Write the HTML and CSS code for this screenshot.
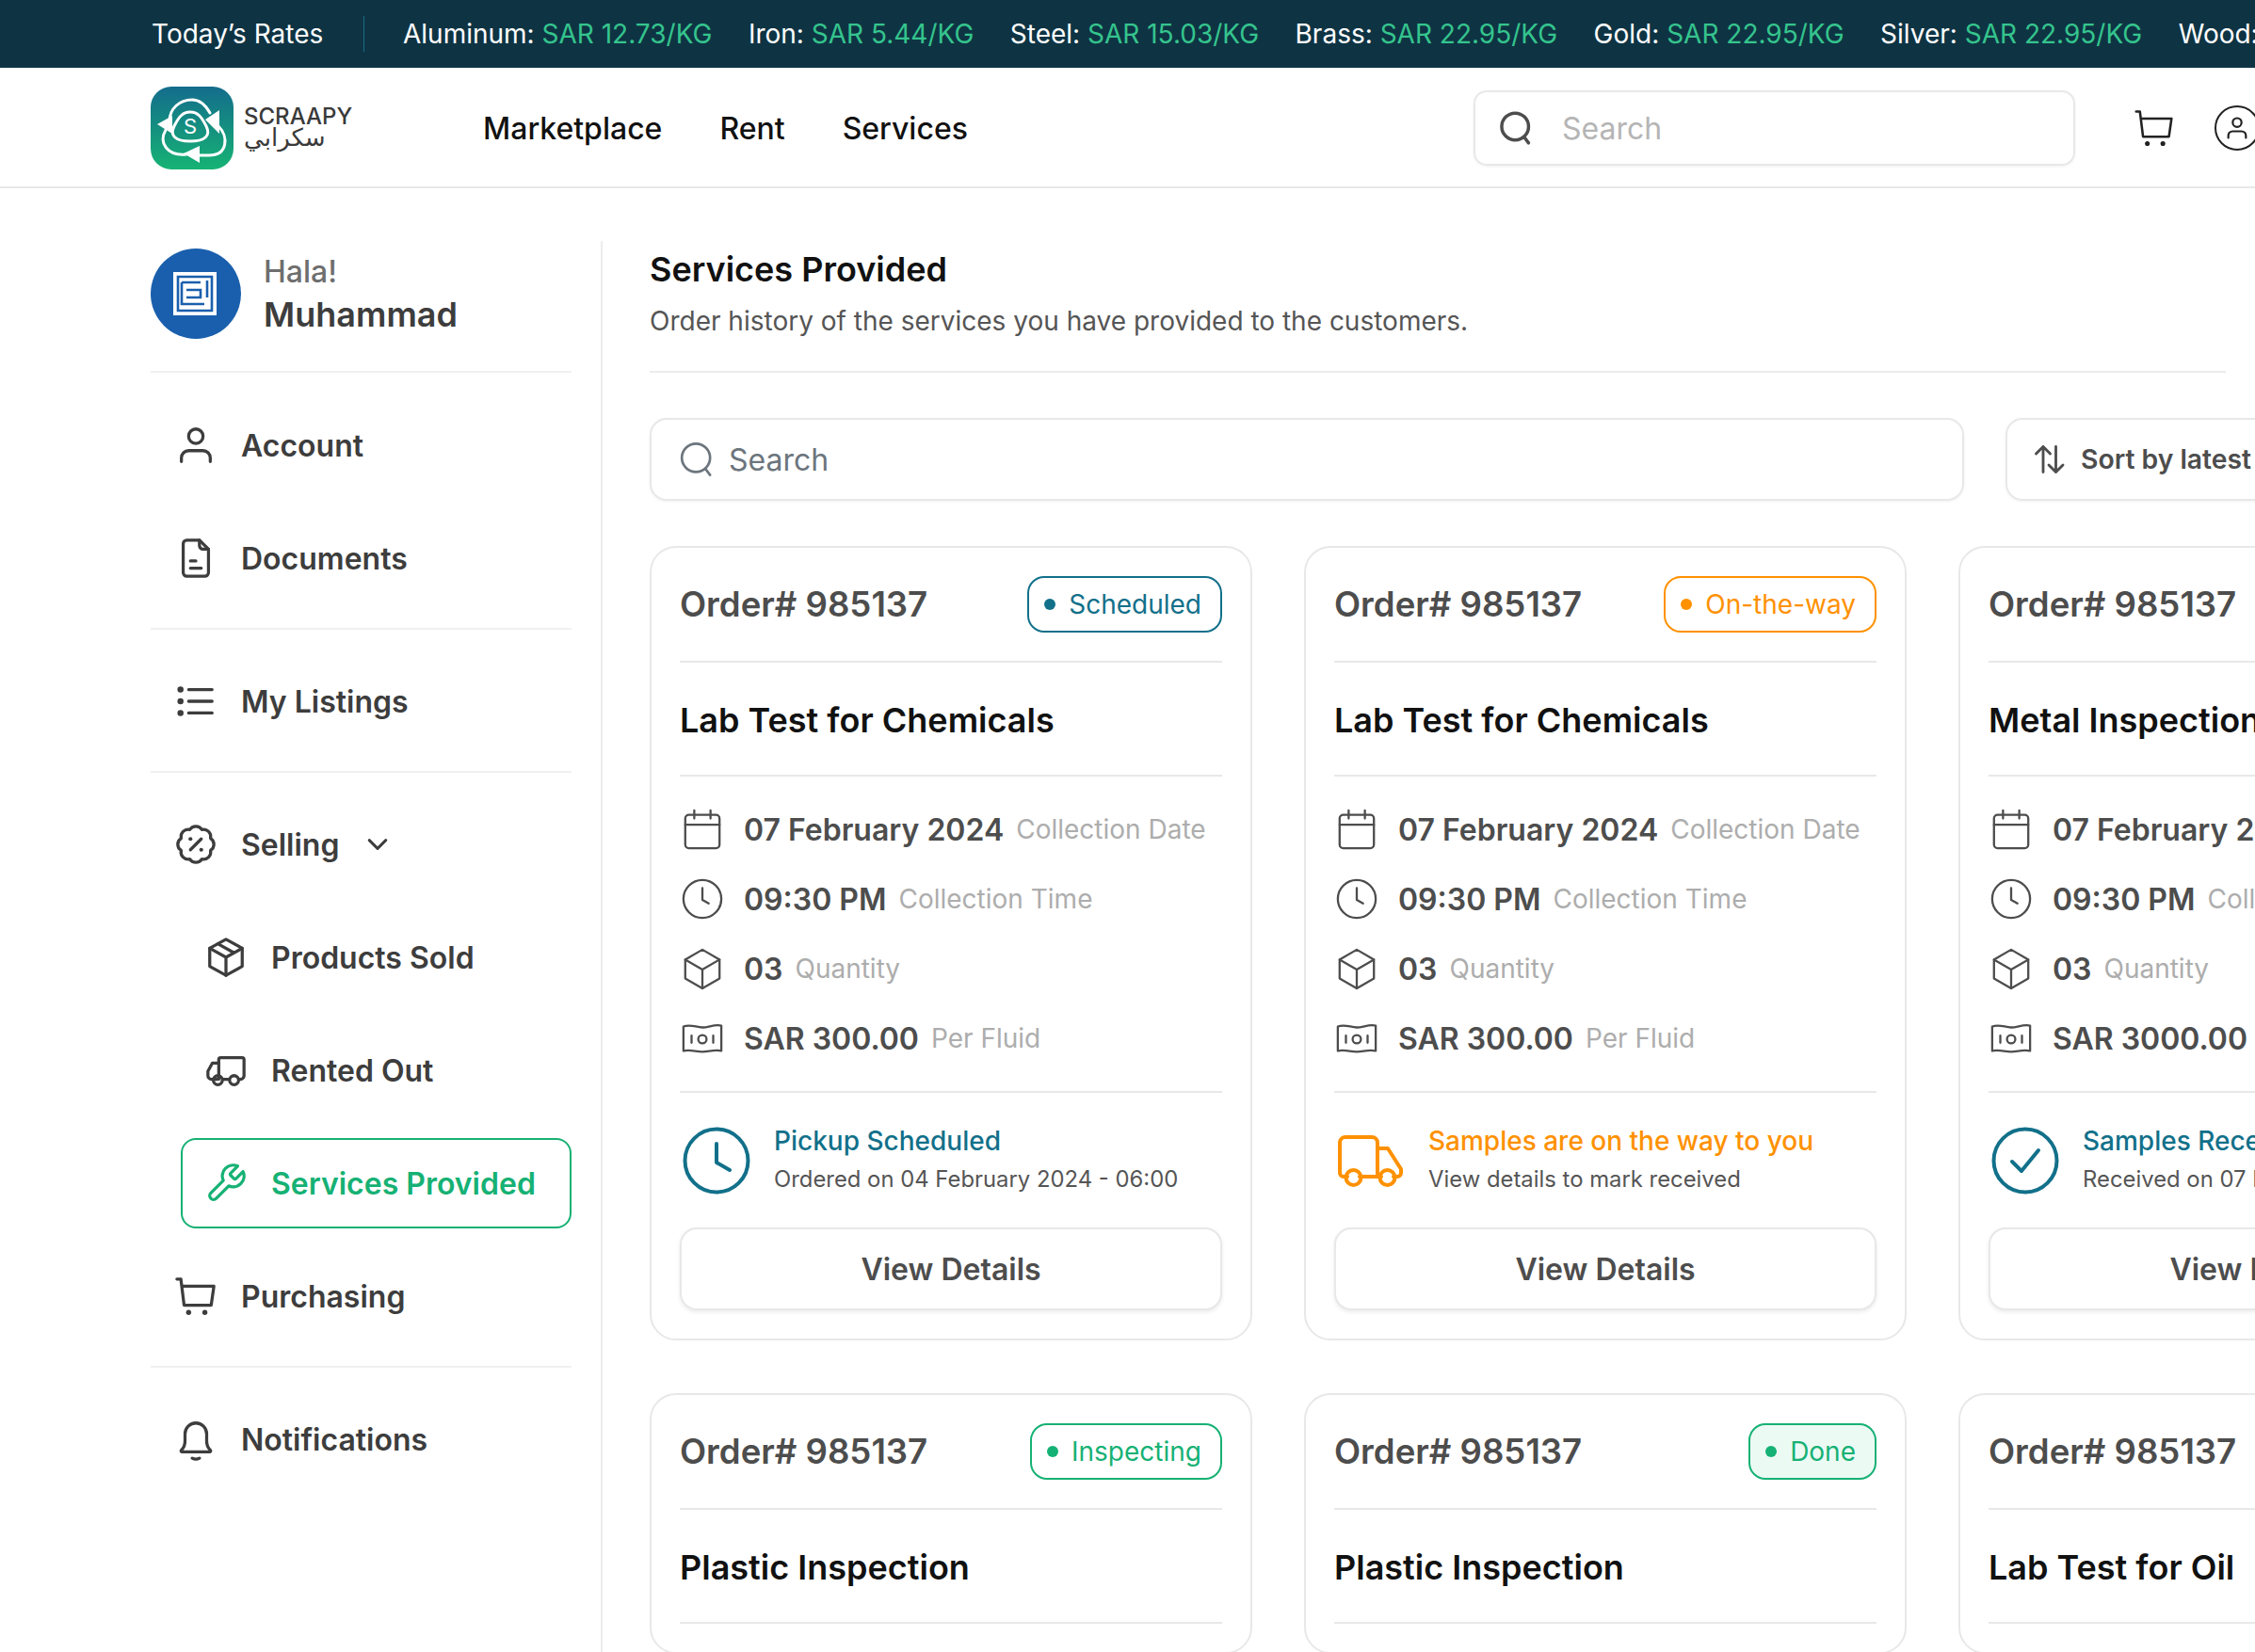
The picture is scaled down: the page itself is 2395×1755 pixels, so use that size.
FILE: index.html
```html
<!DOCTYPE html>
<html>
<head>
    <meta charset="utf-8">
    <meta name="viewport" content="width=device-width, initial-scale=1">
    <title>Services Provided</title>
    <link rel="stylesheet" href="styles.css">
</head>
<body>
    <svg class="sprite" xmlns="http://www.w3.org/2000/svg">
        <symbol id="i-user" viewBox="0 0 24 24"><circle cx="12" cy="7" r="4"/><path d="M4 21v-2a4 4 0 0 1 4-4h8a4 4 0 0 1 4 4v2"/></symbol>
        <symbol id="i-doc" viewBox="0 0 24 24"><path d="M14 2H7a2 2 0 0 0-2 2v16a2 2 0 0 0 2 2h10a2 2 0 0 0 2-2V7z"/><path d="M14 2v3a2 2 0 0 0 2 2h3"/><path d="M9 13.500h3M9 17.500h6"/></symbol>
        <symbol id="i-list" viewBox="0 0 24 24"><path d="M8 5.500h13M8 12h13M8 18.500h13"/><circle class="fill" cx="3.500" cy="5.500" r="1.700"/><circle class="fill" cx="3.500" cy="12" r="1.700"/><circle class="fill" cx="3.500" cy="18.500" r="1.700"/></symbol>
        <symbol id="i-percent" viewBox="0 0 24 24"><path d="M3.850 8.620a4 4 0 0 1 4.780-4.770 4 4 0 0 1 6.740 0 4 4 0 0 1 4.780 4.780 4 4 0 0 1 0 6.740 4 4 0 0 1-4.770 4.780 4 4 0 0 1-6.750 0 4 4 0 0 1-4.780-4.770 4 4 0 0 1 0-6.760Z"/><path d="m15 9-6 6"/><circle class="fill" cx="9" cy="9" r="1.100"/><circle class="fill" cx="15" cy="15" r="1.100"/></symbol>
        <symbol id="i-box" viewBox="0 0 24 24"><path d="M12 2l9 5v10l-9 5-9-5V7z"/><path d="M3 7l9 5 9-5M12 12v10M7.500 4.500l9 5"/></symbol>
        <symbol id="i-truck" viewBox="0 0 24 24"><path d="M7 17H4a2 2 0 0 1-2-2v-2.500L4.500 8H8V6a1 1 0 0 1 1-1h12a1 1 0 0 1 1 1v9a2 2 0 0 1-2 2h-1"/><path d="M8 8v9M10.500 17h3"/><circle cx="7.500" cy="17.500" r="2.500"/><circle cx="16.500" cy="17.500" r="2.500"/></symbol>
        <symbol id="i-wrench" viewBox="0 0 24 24"><path d="M14.700 6.300a1 1 0 0 0 0 1.400l1.600 1.600a1 1 0 0 0 1.400 0l3.770-3.770a6 6 0 0 1-7.940 7.940l-6.910 6.910a2.120 2.120 0 0 1-3-3l6.910-6.910a6 6 0 0 1 7.940-7.940l-3.760 3.760z"/></symbol>
        <symbol id="i-cart" viewBox="0 0 24 24"><path d="M1.500 2.500h2.200L5.500 17h15L22 6.500H4.300"/><circle class="fill" cx="8" cy="21" r="1.400"/><circle class="fill" cx="17" cy="21" r="1.400"/></symbol>
        <symbol id="i-bell" viewBox="0 0 24 24"><path d="M4 18c1.500-1.500 2-3 2-5V9a6 6 0 0 1 12 0v4c0 2 .5 3.500 2 5 .4.500.2 1-.5 1h-15c-.7 0-.9-.5-.5-1z"/><path d="M10 22.500c1.300.7 2.700.7 4 0"/></symbol>
        <symbol id="i-search" viewBox="0 0 24 24"><circle cx="11.500" cy="11" r="9"/><path d="M17.500 18l3 4"/></symbol>
        <symbol id="i-sort" viewBox="0 0 24 24"><path d="M8 21V3M3 8l5-5 5 5M17 3v18M12 16l5 5 5-5"/></symbol>
        <symbol id="i-chevron" viewBox="0 0 24 24"><path d="M5 8.500l7 7 7-7"/></symbol>
        <symbol id="i-calendar" viewBox="0 0 24 24"><rect x="2.500" y="4" width="19" height="18.500" rx="2"/><path d="M2.500 9.500h19M7.500 1.500v4.500M16.500 1.500v4.500"/></symbol>
        <symbol id="i-clock" viewBox="0 0 24 24"><circle cx="12" cy="12" r="10.500"/><path d="M12 6v6.500l3.500 2"/></symbol>
        <symbol id="i-cube" viewBox="0 0 24 24"><path d="M12 1.500l9.500 5.500v10.500L12 23l-9.500-5.500V7z"/><path d="M2.500 7l9.500 5.500L21.500 7M12 12.500V23"/></symbol>
        <symbol id="i-money" viewBox="0 0 24 24"><path d="M1.500 5.500c4-1.500 7 .5 10.500.5s7-2 10.500-1v14c-4-1-7 .5-10.500.5s-7-1.500-10.500-.500z"/><circle cx="12" cy="12.500" r="2.300"/><path d="M6 10.500v4M18 10.500v4"/></symbol>
        <symbol id="i-clock-big" viewBox="0 0 72 72"><circle cx="36" cy="36" r="33.500"/><path d="M36 18v20l14 8"/></symbol>
        <symbol id="i-check-big" viewBox="0 0 72 72"><circle cx="36" cy="36" r="33.500"/><path d="M22 37l10 10 18-22"/></symbol>
        <symbol id="i-van" viewBox="0 0 72 72"><path d="M11 53H7a4 4 0 0 1-4-4V17a6 6 0 0 1 6-6h28a6 6 0 0 1 6 6v36H24M43 23h11l14 22v4a4 4 0 0 1-4 4h-4M43 53h4"/><circle cx="17.500" cy="54" r="8"/><circle cx="53.500" cy="54" r="8"/></symbol>
    </svg>

    <div class="page">
        <div class="rates">
            <span class="rates-title">Today’s Rates</span>
            <span class="rates-list">
                <span class="rate">Aluminum: <b>SAR 12.73/KG</b></span>
                <span class="rate">Iron: <b>SAR 5.44/KG</b></span>
                <span class="rate">Steel: <b>SAR 15.03/KG</b></span>
                <span class="rate">Brass: <b>SAR 22.95/KG</b></span>
                <span class="rate">Gold: <b>SAR 22.95/KG</b></span>
                <span class="rate">Silver: <b>SAR 22.95/KG</b></span>
                <span class="rate">Wood: <b>SAR 22.95/KG</b></span>
            </span>
        </div>

        <header class="nav">
            <div class="logo">
                <svg class="logo-mark" viewBox="0 0 88 88">
                    <defs>
                        <linearGradient id="logoGrad" x1="0" y1="0" x2="0" y2="1">
                            <stop offset="0" stop-color="#146c8c"/>
                            <stop offset="1" stop-color="#16b374"/>
                        </linearGradient>
                    </defs>
                    <rect width="88" height="88" rx="22" fill="url(#logoGrad)"/>
                    <g fill="none" stroke="#fff" stroke-width="3" stroke-linecap="round">
                        <path d="M20 37C20 23 31 14 44 14c8 0 14 5 19 14"/>
                        <path d="M72 42c11 11 10 31-10 31H51"/>
                        <path d="M38 72C18 74 8 60 16 46"/>
                        <path d="M42 27c8 0 12 5 17 15s-1 16-17 16-22-6-17-16 9-15 17-15z"/>
                    </g>
                    <path fill="#fff" d="M7 40l16-9v19zM73 25L58 35l15 15zM35 71l17-8v18z"/>
                    <text class="logo-s" x="42" y="50" text-anchor="middle">S</text>
                </svg>
                <div class="logo-text">
                    <span class="logo-en">SCRAAPY</span>
                    <span class="logo-ar">سكرابي</span>
                </div>
            </div>
            <nav class="nav-links">
                <a>Marketplace</a>
                <a>Rent</a>
                <a>Services</a>
            </nav>
            <div class="nav-search">
                <svg class="ico ico-search"><use href="#i-search"/></svg>
                <span>Search</span>
            </div>
            <svg class="ico nav-cart"><use href="#i-cart"/></svg>
            <span class="nav-user"><svg class="ico"><use href="#i-user"/></svg></span>
        </header>

        <div class="layout">
            <aside class="side">
                <div class="hello">
                    <span class="avatar">
                        <svg viewBox="0 0 96 96">
                            <rect x="24" y="25" width="46" height="46" fill="#fff"/>
                            <g fill="none" stroke="#1a5fad" stroke-width="2.600">
                                <path d="M29 30h36v36H29z"/>
                                <path d="M33 36h20M33 36v23h24M60 34v18M38 44h15v8H38"/>
                            </g>
                        </svg>
                    </span>
                    <div>
                        <div class="hala">Hala!</div>
                        <div class="name">Muhammad</div>
                    </div>
                </div>

                <div class="group">
                    <a class="item"><svg class="ico"><use href="#i-user"/></svg>Account</a>
                    <a class="item"><svg class="ico"><use href="#i-doc"/></svg>Documents</a>
                </div>
                <div class="group">
                    <a class="item"><svg class="ico"><use href="#i-list"/></svg>My Listings</a>
                </div>
                <div class="group">
                    <a class="item"><svg class="ico"><use href="#i-percent"/></svg>Selling<svg class="ico chev"><use href="#i-chevron"/></svg></a>
                    <a class="item sub"><svg class="ico"><use href="#i-box"/></svg>Products Sold</a>
                    <a class="item sub"><svg class="ico"><use href="#i-truck"/></svg>Rented Out</a>
                    <a class="item sub active"><svg class="ico"><use href="#i-wrench"/></svg>Services Provided</a>
                    <a class="item"><svg class="ico"><use href="#i-cart"/></svg>Purchasing</a>
                </div>
                <div class="group last">
                    <a class="item"><svg class="ico"><use href="#i-bell"/></svg>Notifications</a>
                </div>
            </aside>

            <main class="main">
                <div class="head">
                    <h1>Services Provided</h1>
                    <p>Order history of the services you have provided to the customers.</p>
                </div>

                <div class="tools">
                    <div class="search">
                        <svg class="ico"><use href="#i-search"/></svg>
                        <span>Search</span>
                    </div>
                    <div class="sort">
                        <svg class="ico"><use href="#i-sort"/></svg>
                        <span>Sort by latest</span>
                    </div>
                </div>

                <div class="cards">
                    <div class="card">
                        <div class="card-head"><span class="order">Order# 985137</span><span class="badge teal"><i></i>Scheduled</span></div>
                        <div class="card-title">Lab Test for Chemicals</div>
                        <div class="facts">
                            <div class="fact"><svg class="ico"><use href="#i-calendar"/></svg><b>07 February 2024</b><span>Collection Date</span></div>
                            <div class="fact"><svg class="ico"><use href="#i-clock"/></svg><b>09:30 PM</b><span>Collection Time</span></div>
                            <div class="fact"><svg class="ico"><use href="#i-cube"/></svg><b>03</b><span>Quantity</span></div>
                            <div class="fact"><svg class="ico"><use href="#i-money"/></svg><b>SAR 300.00</b><span>Per Fluid</span></div>
                        </div>
                        <div class="status teal">
                            <svg class="ico"><use href="#i-clock-big"/></svg>
                            <div><div class="status-title">Pickup Scheduled</div><div class="status-sub">Ordered on 04 February 2024 - 06:00</div></div>
                        </div>
                        <button class="details" type="button">View Details</button>
                    </div>

                    <div class="card">
                        <div class="card-head"><span class="order">Order# 985137</span><span class="badge orange"><i></i>On-the-way</span></div>
                        <div class="card-title">Lab Test for Chemicals</div>
                        <div class="facts">
                            <div class="fact"><svg class="ico"><use href="#i-calendar"/></svg><b>07 February 2024</b><span>Collection Date</span></div>
                            <div class="fact"><svg class="ico"><use href="#i-clock"/></svg><b>09:30 PM</b><span>Collection Time</span></div>
                            <div class="fact"><svg class="ico"><use href="#i-cube"/></svg><b>03</b><span>Quantity</span></div>
                            <div class="fact"><svg class="ico"><use href="#i-money"/></svg><b>SAR 300.00</b><span>Per Fluid</span></div>
                        </div>
                        <div class="status orange">
                            <svg class="ico"><use href="#i-van"/></svg>
                            <div><div class="status-title">Samples are on the way to you</div><div class="status-sub">View details to mark received</div></div>
                        </div>
                        <button class="details" type="button">View Details</button>
                    </div>

                    <div class="card">
                        <div class="card-head"><span class="order">Order# 985137</span><span class="badge green"><i></i>Received</span></div>
                        <div class="card-title">Metal Inspection</div>
                        <div class="facts">
                            <div class="fact"><svg class="ico"><use href="#i-calendar"/></svg><b>07 February 2024</b><span>Collection Date</span></div>
                            <div class="fact"><svg class="ico"><use href="#i-clock"/></svg><b>09:30 PM</b><span>Collection Time</span></div>
                            <div class="fact"><svg class="ico"><use href="#i-cube"/></svg><b>03</b><span>Quantity</span></div>
                            <div class="fact"><svg class="ico"><use href="#i-money"/></svg><b>SAR 3000.00</b><span>Per Fluid</span></div>
                        </div>
                        <div class="status teal">
                            <svg class="ico"><use href="#i-check-big"/></svg>
                            <div><div class="status-title">Samples Received</div><div class="status-sub">Received on 07 February 2024 - 06:00</div></div>
                        </div>
                        <button class="details" type="button">View Details</button>
                    </div>

                    <div class="card">
                        <div class="card-head"><span class="order">Order# 985137</span><span class="badge green"><i></i>Inspecting</span></div>
                        <div class="card-title">Plastic Inspection</div>
                    </div>

                    <div class="card">
                        <div class="card-head"><span class="order">Order# 985137</span><span class="badge green done"><i></i>Done</span></div>
                        <div class="card-title">Plastic Inspection</div>
                    </div>

                    <div class="card">
                        <div class="card-head"><span class="order">Order# 985137</span><span class="badge green done"><i></i>Done</span></div>
                        <div class="card-title">Lab Test for Oil</div>
                    </div>
                </div>
            </main>
        </div>
    </div>
</body>
</html>
```

FILE: styles.css
```css
* {
    margin: 0;
    padding: 0;
    box-sizing: border-box;
}
html, body {
    height: 100%;
    overflow: hidden;
    background: #fff;
}
body {
    font-family: Inter, "Noto Sans", sans-serif;
    color: #3d3d3d;
}
.sprite {
    display: none;
}
.ico {
    display: block;
    flex: none;
    fill: none;
    stroke: currentColor;
    stroke-width: 1.9;
    stroke-linecap: round;
    stroke-linejoin: round;
}
.fill {
    fill: currentColor;
    stroke: none;
}
.page {
    width: 2800px;
    height: 1755px;
    overflow: hidden;
}

/* rates strip */
.rates {
    display: flex;
    align-items: center;
    height: 72px;
    padding-left: 161px;
    background: #0e3444;
    color: #fff;
    font-size: 28px;
    white-space: nowrap;
}
.rates-title {
    width: 226px;
    height: 38px;
    line-height: 38px;
    border-right: 1px solid #1c6b85;
}
.rates-list {
    display: flex;
    gap: 38.500px;
    margin-left: 41px;
}
.rate b {
    font-weight: 400;
    color: #35c48d;
}

/* header */
.nav {
    display: flex;
    align-items: center;
    height: 128px;
    padding: 2px 0 0 160px;
    border-bottom: 2px solid #e8e8e8;
}
.logo {
    display: flex;
    align-items: center;
    gap: 11px;
    width: 353px;
}
.logo-mark {
    width: 88px;
    height: 88px;
}
.logo-s {
    font-size: 22px;
    fill: #fff;
}
.logo-text {
    display: flex;
    flex-direction: column;
    padding-bottom: 8px;
    color: #3a3a3a;
}
.logo-en {
    font-size: 24px;
    font-weight: 500;
    line-height: 28px;
}
.logo-ar {
    font-family: "DejaVu Sans", sans-serif;
    font-size: 26px;
    line-height: 16px;
    text-align: left;
}
.nav-links {
    display: flex;
    gap: 61px;
    font-size: 32px;
    font-weight: 500;
    color: #111;
}
.nav-search {
    display: flex;
    align-items: center;
    gap: 30px;
    width: 639px;
    height: 80px;
    margin-left: 537px;
    padding-left: 24px;
    border: 2px solid #e8e8e8;
    border-radius: 14px;
    box-shadow: 0 1px 3px rgba(0, 0, 0, .06);
    font-size: 32px;
    color: #b5b5b5;
}
.ico-search {
    width: 38px;
    height: 38px;
    color: #4d4d4d;
    stroke-width: 2.2;
}
.nav-cart {
    width: 44px;
    height: 48px;
    margin-left: 62px;
    color: #222;
    stroke-width: 1.4;
}
.nav-user {
    display: flex;
    align-items: center;
    justify-content: center;
    width: 48px;
    height: 48px;
    margin-left: 42px;
    border: 2px solid #222;
    border-radius: 50%;
    color: #222;
}
.nav-user .ico {
    width: 28px;
    height: 28px;
}

/* sidebar + main */
.layout {
    display: flex;
    align-items: flex-start;
    margin-top: 56px;
    height: 1500px;
}
.side {
    flex: none;
    width: 640px;
    height: 100%;
    padding: 0 31px 0 160px;
    border-right: 2px solid #ececec;
}
.hello {
    display: flex;
    align-items: center;
    gap: 24px;
    padding: 8px 0 34px;
    border-bottom: 2px solid #f0f0f0;
}
.avatar {
    flex: none;
    width: 96px;
    height: 96px;
    border-radius: 50%;
    background: #1a5fad;
}
.avatar svg {
    display: block;
}
.hala {
    font-size: 32px;
    font-weight: 500;
    color: #6e6e6e;
    line-height: 44px;
}
.name {
    font-size: 36px;
    font-weight: 600;
    line-height: 46px;
}
.group {
    padding: 16px 0 14px;
    border-bottom: 2px solid #f0f0f0;
}
.hello + .group {
    padding-top: 17px;
}
.group.last {
    border-bottom: 0;
}
.item {
    display: flex;
    align-items: center;
    gap: 25px;
    height: 120px;
    padding-left: 25px;
    font-size: 32px;
    font-weight: 600;
    color: #3d3d3d;
}
.item .ico {
    width: 46px;
    height: 46px;
    stroke-width: 1.7;
}
.item.sub {
    padding-left: 57px;
}
.item .chev {
    width: 30px;
    height: 30px;
    margin-left: 1px;
    stroke-width: 2.4;
}
.item.active {
    height: 96px;
    margin: 12px 0;
    margin-left: 32px;
    padding-left: 23px;
    border: 2px solid #16b174;
    border-radius: 16px;
    color: #16b174;
}
.main {
    flex: none;
    width: 2100px;
    padding-left: 50px;
}
.head {
    width: 1674px;
    height: 140px;
    padding-top: 8px;
    border-bottom: 2px solid #ececec;
}
.head h1 {
    font-size: 36px;
    font-weight: 600;
    line-height: 44px;
    color: #111;
}
.head p {
    margin-top: 13px;
    font-size: 28px;
    line-height: 40px;
    color: #555;
}
.tools {
    display: flex;
    gap: 44px;
    margin-top: 48px;
}
.search, .sort {
    display: flex;
    align-items: center;
    height: 88px;
    border: 2px solid #e8e8e8;
    border-radius: 18px;
    box-shadow: 0 1px 3px rgba(0, 0, 0, .06);
}
.search {
    gap: 14px;
    width: 1396px;
    padding-left: 28px;
    font-size: 32px;
    color: #6c757d;
}
.search .ico {
    width: 40px;
    height: 40px;
    stroke-width: 1.6;
}
.sort {
    gap: 16px;
    width: 400px;
    padding-left: 26px;
    font-size: 28.300px;
    font-weight: 600;
    color: #4d4d4d;
}
.sort .ico {
    width: 36px;
    height: 36px;
}

/* cards */
.cards {
    display: grid;
    grid-template-columns: repeat(3, 640px);
    column-gap: 55px;
    row-gap: 56px;
    margin-top: 48px;
}
.card {
    padding: 0 30px 30px;
    border: 2px solid #e8e8e8;
    border-radius: 28px;
}
.card-head {
    display: flex;
    align-items: center;
    justify-content: space-between;
    height: 122px;
    border-bottom: 2px solid #e8e8e8;
}
.order {
    font-size: 36.600px;
    font-weight: 600;
    color: #4d4d4d;
}
.badge {
    display: flex;
    align-items: center;
    gap: 14px;
    height: 60px;
    padding: 0 20px 0 16px;
    border: 2px solid currentColor;
    border-radius: 18px;
    font-size: 28px;
}
.badge i {
    width: 12px;
    height: 12px;
    border-radius: 50%;
    background: currentColor;
}
.teal { color: #12708a; }
.orange { color: #ff9100; }
.green { color: #16b174; }
.badge.done {
    background: #ecfaf4;
}
.card-title {
    display: flex;
    align-items: center;
    height: 121px;
    padding-top: 2px;
    border-bottom: 2px solid #e8e8e8;
    font-size: 36px;
    font-weight: 600;
    color: #111;
}
.facts {
    padding: 19px 0;
    border-bottom: 2px solid #e8e8e8;
}
.fact {
    display: flex;
    align-items: center;
    height: 74px;
    font-size: 28px;
    color: #adadad;
    white-space: nowrap;
}
.fact .ico {
    width: 46px;
    height: 46px;
    margin: 0 21px 0 1px;
    color: #4d4d4d;
    stroke-width: 1.2;
}
.fact b {
    margin-right: 13px;
    font-size: 32px;
    font-weight: 600;
    color: #4d4d4d;
}
.status {
    display: flex;
    align-items: center;
    gap: 25px;
    height: 143px;
}
.status .ico {
    width: 72px;
    height: 72px;
    margin-left: 3px;
    stroke-width: 4;
}
.status-title {
    font-size: 28px;
    font-weight: 500;
    line-height: 40px;
}
.status-sub {
    margin-top: 1px;
    font-size: 23.850px;
    line-height: 40px;
    color: #555;
    white-space: nowrap;
}
.details {
    display: block;
    width: 100%;
    height: 88px;
    background: #fff;
    border: 2px solid #e8e8e8;
    border-radius: 18px;
    box-shadow: 0 2px 4px rgba(0, 0, 0, .08);
    font-family: inherit;
    font-size: 32px;
    font-weight: 600;
    color: #4d4d4d;
}
```
